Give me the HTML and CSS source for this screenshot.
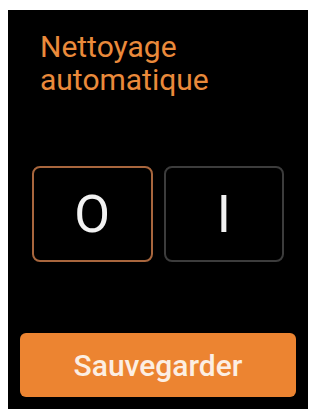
FILE: index.html
```html
<!DOCTYPE html>
<html lang="fr">
<head>
  <meta charset="UTF-8" />
  <meta name="viewport" content="width=device-width, initial-scale=1.0"/>
  <title>Nettoyage automatique</title>
  <link rel="stylesheet" href="styles.css">
</head>
<body>
  <div class="panel">
    <h1 class="title">Nettoyage<br>automatique</h1>

    <div class="toggle">
      <button class="toggle-btn active">O</button>
      <button class="toggle-btn">I</button>
    </div>

    <button class="save-btn">Sauvegarder</button>
  </div>
</body>
</html>
```

FILE: styles.css
```css
body {
  margin: 0;
  background: #fff;
  font-family: Roboto, 'Liberation Sans', sans-serif;
}

.panel {
  margin: 10px 7px 3px 8px;
  height: 399px;
  box-sizing: border-box;
  background: #000;
  padding: 20px 12px 12px;
  display: flex;
  flex-direction: column;
}

.title {
  margin: 0 20px;
  font-size: 30px;
  font-weight: 400;
  line-height: 33px;
  color: #ea8a3b;
}

.toggle {
  display: flex;
  gap: 11px;
  margin: 70px 12px 0;
}

.toggle-btn {
  flex: 1;
  height: 96px;
  background: #000;
  border: 2px solid #3c3c3c;
  border-radius: 8px;
  color: #f2f2f2;
  font-family: Roboto, sans-serif;
  font-size: 52px;
  font-weight: 400;
  padding: 0;
}

.toggle-btn.active {
  border-color: #a8663d;
}

.save-btn {
  margin-top: auto;
  height: 64px;
  border: none;
  border-radius: 6px;
  background: #ec8431;
  color: #fcefe3;
  font-family: Roboto, sans-serif;
  font-size: 30px;
  font-weight: 500;
}
```
